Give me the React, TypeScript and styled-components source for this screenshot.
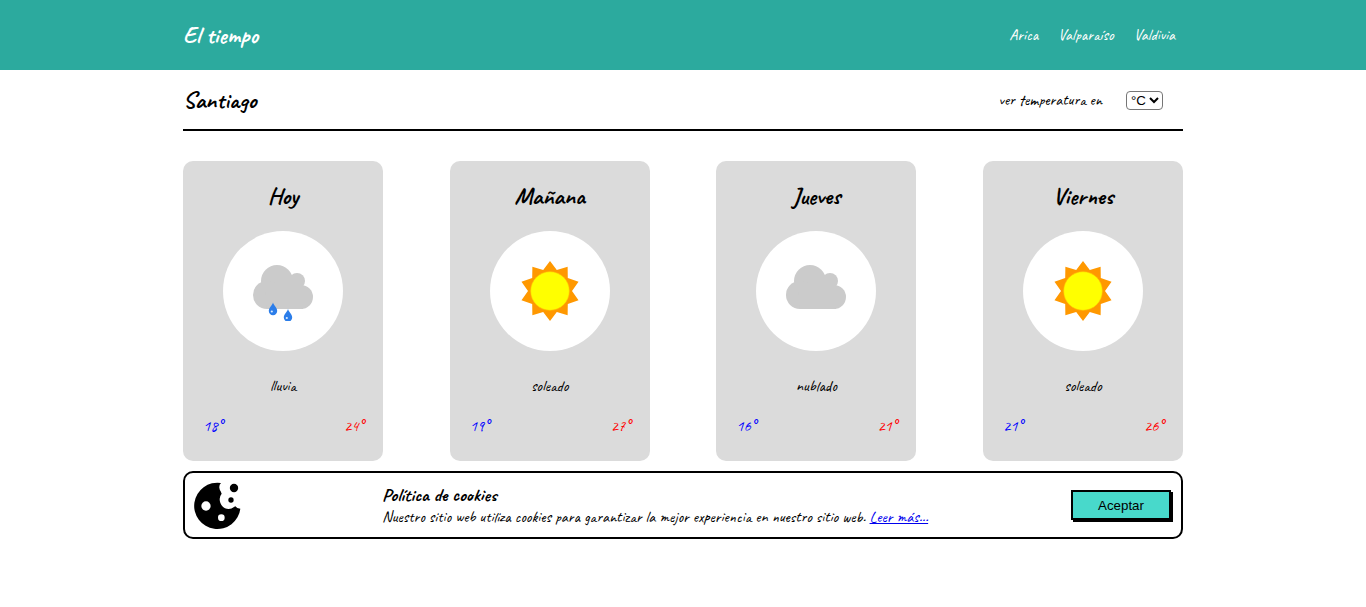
import React from 'react';
import styled, { createGlobalStyle } from 'styled-components';

const GlobalStyle = createGlobalStyle`
  * { box-sizing: border-box; }
  body {
    margin: 0;
    background: #fff;
    color: #000;
    font-family: Caveat, Lato, "Liberation Sans", cursive;
    font-size: 16px;
    line-height: 20px;
  }
  h1, h2, h3, p { margin: 0; }
`;

const Header = styled.header`
  background: #2caa9e;
  color: #fff;
`;

const Container = styled.div`
  width: 100%;
  max-width: 1000px;
  margin: 0 auto;
`;

const HeaderBar = styled(Container)`
  display: flex;
  align-items: center;
  justify-content: space-between;
  height: 70px;
`;

const Title = styled.h1`
  font-size: 24px;
  line-height: 30px;
  font-weight: 700;
`;

const Nav = styled.nav`
  display: flex;
  gap: 20px;
  padding-right: 8px;
`;

const NavLink = styled.a`
  color: #fff;
  text-decoration: none;
`;

const CityBar = styled.div`
  display: flex;
  align-items: center;
  justify-content: space-between;
  height: 61px;
  margin-bottom: 30px;
  padding-right: 20px;
  border-bottom: 2px solid #000;
`;

const UnitPicker = styled.label`
  display: flex;
  align-items: baseline;
  gap: 24px;
`;

const UnitSelect = styled.select`
  height: 19px;
  color: #000;
  background: #fff;
  border: 1px solid #767676;
  border-radius: 4px;
  font-family: "Liberation Sans", Arial, sans-serif;
`;

const Forecast = styled.section`
  display: flex;
  flex-wrap: wrap;
  justify-content: space-between;
  gap: 10px;
`;

const Card = styled.article`
  display: flex;
  flex-direction: column;
  align-items: center;
  width: 200px;
  height: 300px;
  padding: 20px;
  border-radius: 10px;
  background: #dbdbdb;
`;

const Disc = styled.div`
  display: flex;
  align-items: center;
  justify-content: center;
  width: 120px;
  height: 120px;
  margin: 20px 0 25px;
  border-radius: 50%;
  background: #fff;
`;

const Range = styled.div`
  display: flex;
  justify-content: space-between;
  width: 100%;
  margin-top: 20px;
`;

const Degrees = styled.span<{ $hot?: boolean }>`
  color: ${({ $hot }) => ($hot ? '#f00' : '#00f')};
`;

const CookieBox = styled.aside`
  display: grid;
  grid-template-columns: 189px 1fr auto;
  align-items: center;
  min-height: 68px;
  margin-top: 10px;
  padding: 0 10px 0 8px;
  border: 2px solid #000;
  border-radius: 10px;
`;

const CookieTitle = styled.h3`
  font-size: 19px;
  line-height: 24px;
`;

const CookieLink = styled.a`
  color: #00e;
`;

const AcceptButton = styled.button`
  width: 100px;
  height: 30px;
  padding: 0;
  color: #000;
  background: #48d9cb;
  border: 2px solid #000;
  box-shadow: 2px 2px 0 #000;
  font-family: "Liberation Sans", Arial, sans-serif;
`;

const Cloud = () => (
  <g fill="#cbcbcb">
    <circle cx="24" cy="20" r="16" />
    <circle cx="44" cy="20" r="8" />
    <circle cx="14" cy="34" r="14" />
    <circle cx="48" cy="36" r="12" />
    <path d="M12 22H50V48H14Z" />
  </g>
);

const Drop = ({ x, y }: { x: number; y: number }) => (
  <g transform={`translate(${x} ${y})`}>
    <path d="M0 0C1 3.4 4.2 5.4 4.2 8.5A4.2 4.2 0 0 1-4.2 8.5C-4.2 5.4-1 3.4 0 0Z" fill="#2b7de9" />
    <circle cx="-1.2" cy="9" r="1.1" fill="#dcecff" />
  </g>
);

const sunPoints = Array.from({ length: 20 }, (_, i) => {
  const r = i % 2 ? 22 : 30;
  const a = (i * Math.PI) / 10;
  return `${(30 + r * Math.sin(a)).toFixed(2)},${(30 - r * Math.cos(a)).toFixed(2)}`;
}).join(' ');

type Sky = 'lluvia' | 'soleado' | 'nublado';

const WeatherIcon = ({ sky }: { sky: Sky }) => (
  <svg width="60" height="60" viewBox="0 0 60 60" aria-hidden="true">
    {sky === 'soleado' ? (
      <>
        <polygon points={sunPoints} fill="#ff9800" />
        <circle cx="30" cy="30" r="19.3" fill="#ff0" stroke="#ffc800" strokeWidth=".6" />
      </>
    ) : (
      <Cloud />
    )}
    {sky === 'lluvia' && (
      <>
        <Drop x={20} y={41.5} />
        <Drop x={35} y={48} />
      </>
    )}
  </svg>
);

const CookieIcon = () => (
  <svg width="50" height="50" viewBox="-3 -8 150 150" aria-hidden="true">
    <path d="M81 1Q75 7 76 15Q77 22 80 26L83 33Q77 40 77 49C77 65 88 79 104 79Q113 79 120 73L124 71L130 76L139 78A69.5 69.5 0 1 1 81 1Z" />
    <circle cx="120" cy="16" r="12.5" />
    <circle cx="111" cy="52" r="8" />
    <circle cx="36" cy="70" r="14" fill="#fff" />
    <circle cx="82" cy="105" r="10" fill="#fff" />
  </svg>
);

const days: { name: string; sky: Sky; min: number; max: number }[] = [
  { name: 'Hoy', sky: 'lluvia', min: 18, max: 24 },
  { name: 'Mañana', sky: 'soleado', min: 19, max: 27 },
  { name: 'Jueves', sky: 'nublado', min: 16, max: 21 },
  { name: 'Viernes', sky: 'soleado', min: 21, max: 26 },
];

export default function App() {
  return (
    <>
      <GlobalStyle />
      <Header>
        <HeaderBar>
          <Title>El tiempo</Title>
          <Nav>
            {['Arica', 'Valparaíso', 'Valdivia'].map((city) => (
              <NavLink key={city} href="#">{city}</NavLink>
            ))}
          </Nav>
        </HeaderBar>
      </Header>
      <Container as="main">
        <CityBar>
          <Title as="h2">Santiago</Title>
          <UnitPicker>
            ver temperatura en
            <UnitSelect>
              <option>°C</option>
              <option>°F</option>
            </UnitSelect>
          </UnitPicker>
        </CityBar>
        <Forecast>
          {days.map((day) => (
            <Card key={day.name}>
              <Title as="h2">{day.name}</Title>
              <Disc>
                <WeatherIcon sky={day.sky} />
              </Disc>
              <p>{day.sky}</p>
              <Range>
                <Degrees>{day.min}°</Degrees>
                <Degrees $hot>{day.max}°</Degrees>
              </Range>
            </Card>
          ))}
        </Forecast>
        <CookieBox>
          <CookieIcon />
          <div>
            <CookieTitle>Política de cookies</CookieTitle>
            <p>
              Nuestro sitio web utiliza cookies para garantizar la mejor experiencia en nuestro sitio web.{' '}
              <CookieLink href="#">Leer más...</CookieLink>
            </p>
          </div>
          <AcceptButton type="button">Aceptar</AcceptButton>
        </CookieBox>
      </Container>
    </>
  );
}
